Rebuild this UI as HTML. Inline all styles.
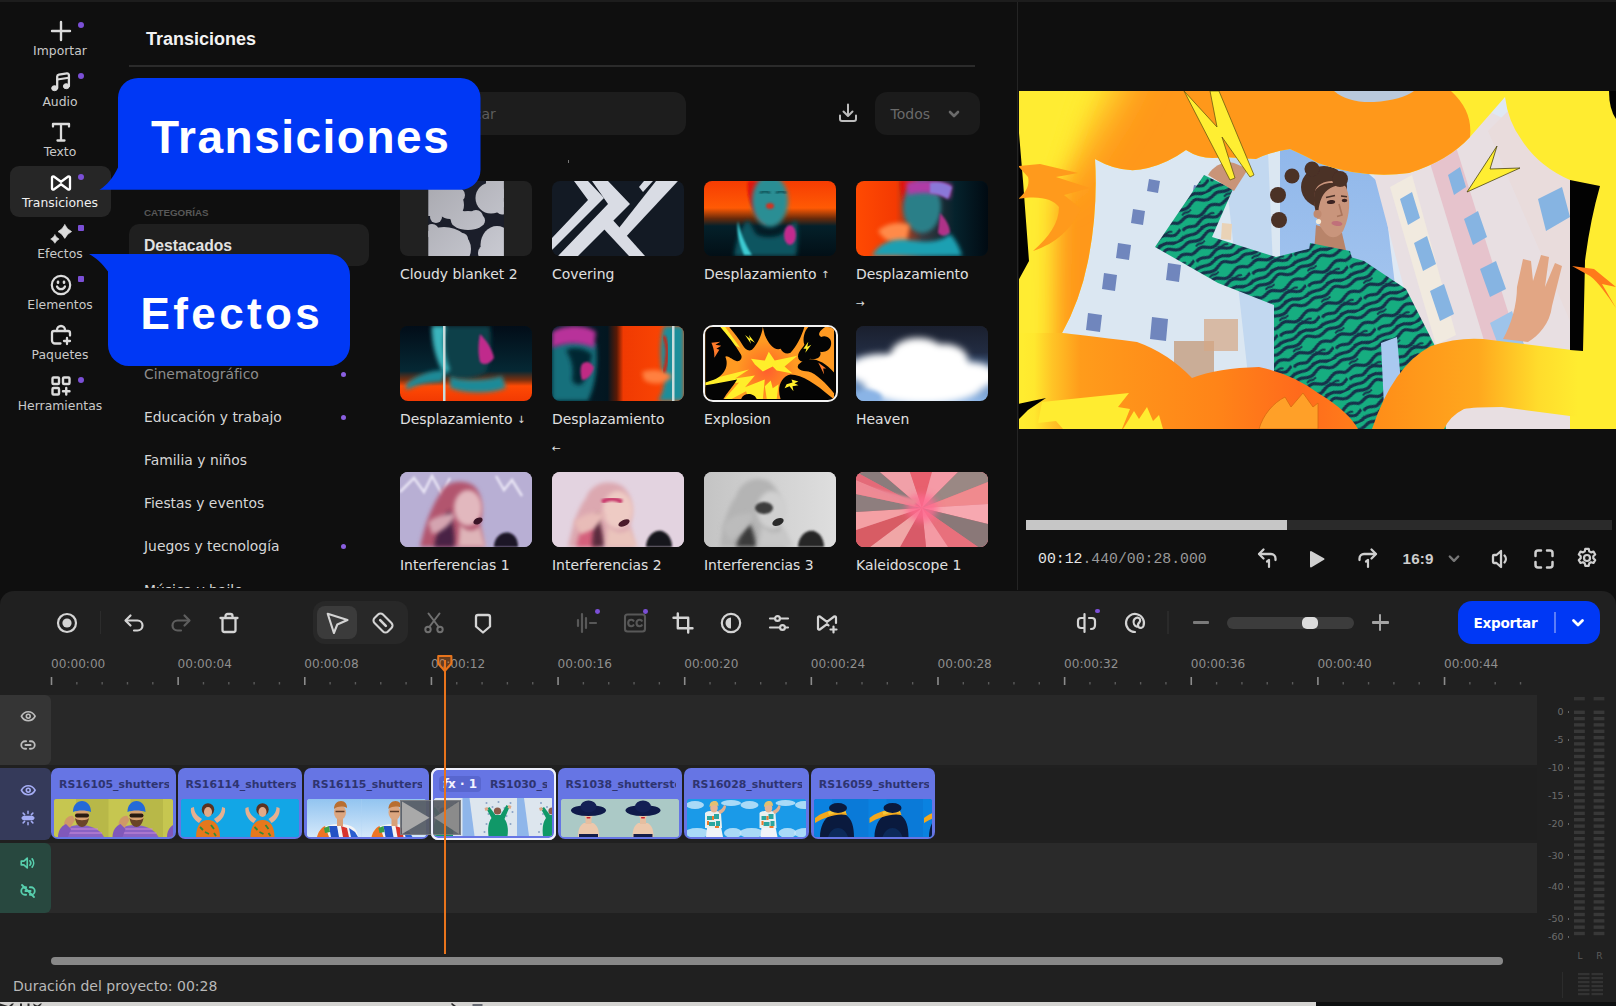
<!DOCTYPE html>
<html lang="es">
<head>
<meta charset="utf-8">
<title>Editor de vídeo</title>
<style>
*{box-sizing:border-box;margin:0;padding:0}
html,body{width:1616px;height:1006px;overflow:hidden;background:#0f0f0f}
body{position:relative;font-family:"Liberation Sans",sans-serif;color:#e4e4e4}
.abs{position:absolute}
#topstrip{left:0;top:0;width:1616px;height:2px;background:#1d1d1d}
/* sidebar */
.sb{position:absolute;left:0;width:120px;text-align:center;font-family:"DejaVu Sans","Liberation Sans",sans-serif;font-size:12.4px;color:#c9c9c9;line-height:16px;white-space:nowrap}
.sb svg{position:absolute;left:48.5px;top:-24px;width:24px;height:24px;fill:none;stroke:#dcdcdc;stroke-width:2;stroke-linecap:round;stroke-linejoin:round}
.dot{position:absolute;width:6px;height:6px;border-radius:50%;background:#7b4fd6}
#sbsel{left:10px;top:166px;width:101px;height:51px;border-radius:9px;background:#262626}
/* panel */
#ptitle{left:146px;top:28.3px;font-size:18px;font-weight:bold;color:#f2f2f2;line-height:22px}
#pline{left:129px;top:65.4px;width:846px;height:1.6px;background:#2b2b2b}
#search{left:396px;top:92px;width:290px;height:43px;border-radius:12px;background:#1d1d1d}
#search span{position:absolute;left:52px;top:12px;font-family:"DejaVu Sans","Liberation Sans",sans-serif;font-size:14px;color:#5c5c5c;line-height:20px}
#todos{left:875px;top:92px;width:105px;height:43px;border-radius:12px;background:#1b1b1b}
#todos span{position:absolute;left:15.5px;top:12px;font-family:"DejaVu Sans","Liberation Sans",sans-serif;font-size:14px;color:#6a6a6a;line-height:20px}
.cat{position:absolute;left:144px;font-family:"DejaVu Sans","Liberation Sans",sans-serif;font-size:13.9px;color:#d6d6d6;line-height:20px;white-space:nowrap}
.cdot{position:absolute;left:340.5px;width:5px;height:5px;margin-top:.5px;border-radius:50%;background:#8a5fe0}
#catsel{left:129px;top:224px;width:240px;height:42px;border-radius:10px;background:#1f1f1f}
.th{position:absolute;width:132px;height:75px;border-radius:8px;overflow:hidden;background:#222}
.th svg{position:absolute;left:0;top:0;width:132px;height:75px;display:block}
.tl{position:absolute;font-family:"DejaVu Sans","Liberation Sans",sans-serif;font-size:13.95px;color:#e0e0e0;line-height:20px;white-space:nowrap}
/* bubbles */
.bub{position:absolute;background:#0038f5;color:#fff;font-weight:bold;font-size:48px;line-height:56px;white-space:nowrap}
/* preview */
#vdiv{left:1017px;top:2px;width:1px;height:588px;background:#242424}
#prev{left:1019px;top:91px;width:597px;height:338px;overflow:hidden;background:#ffe92e}
#pbar{left:1026px;top:520px;width:586px;height:10px;background:#2a2a2a}
#pbar i{position:absolute;left:0;top:0;width:261px;height:10px;background:#c6c6c6}
#tc{left:1038px;top:549.6px;font-family:"Liberation Mono",monospace;font-size:14.8px;line-height:18px;color:#9a9a9a;white-space:nowrap}
#tc b{font-weight:normal;color:#e6e6e6}
/* timeline */
#tlp{left:0;top:590.5px;width:1616px;height:411.5px;background:#202020;border-radius:14px 14px 0 0}
#botl{left:0;top:1002.2px;width:1316px;height:3.8px;background:#d4d3d1}
#botr{left:1316px;top:1002.6px;width:300px;height:3.4px;background:#0d0f10}
.rl{position:absolute;top:656px;font-family:"DejaVu Sans","Liberation Sans",sans-serif;font-size:12.1px;color:#8f8f8f;line-height:16px;white-space:nowrap}
.trk{position:absolute;left:0;width:1537px;height:70px;background:#282828}
.trk i{position:absolute;left:0;top:0;width:51px;height:70px;border-radius:0 6px 6px 0}
.clip{position:absolute;top:768px;height:71px;border-radius:7px;background:#6675e4;overflow:hidden}
.clip span{position:absolute;left:8px;top:8.5px;width:110px;overflow:hidden;font-family:"DejaVu Sans","Liberation Sans",sans-serif;font-size:10.9px;font-weight:bold;color:#2e3470;line-height:16px;white-space:nowrap}
.clip.sel{border:2px solid #eef0fb;top:768px;height:71.5px}
.clip.sel span{top:6.5px}
.clip.sel .im{left:1px;right:1px;top:28px}
.fx{position:absolute;left:6px;top:5.5px;width:42px;height:16.5px;border-radius:4px;background:#5866cf;color:#f2f3ff;font:bold 12px/16.5px "DejaVu Sans","Liberation Sans",sans-serif;text-align:center;white-space:nowrap}
.fx em{font-style:italic}
.clip .im{position:absolute;left:3px;right:3px;top:30.5px;height:38px;border-radius:3px;overflow:hidden}
#scroll{left:51px;top:957px;width:1452px;height:8px;border-radius:4px;background:#888}
#status{left:13px;top:975.5px;font-family:"DejaVu Sans","Liberation Sans",sans-serif;font-size:14px;color:#b9b9b9;line-height:20px}
.ic{position:absolute;width:24px;height:24px;fill:none;stroke:#d8d8d8;stroke-width:2;stroke-linecap:round;stroke-linejoin:round;overflow:visible}
</style>
</head>
<body>
<div class="abs" id="topstrip"></div>
<!--SIDEBAR-->
<div class="abs" id="sbsel"></div>
<div class="sb" style="top:43px">Importar<svg viewBox="0 0 24 24" style="stroke-width:2.4"><path d="M12 3v18M3 12h18"/></svg><i class="dot" style="left:78px;top:-21px"></i></div>
<div class="sb" style="top:93.7px">Audio<svg viewBox="0 0 24 24"><path d="M8.2 18V6.6c0-1 .7-1.8 1.700-2L18 3.400c1-.1 1.900.6 1.900 1.600V16" stroke-width="2.300"/><path d="M8.400 9.400L19.800 7.700" stroke-width="2"/><ellipse cx="5.600" cy="18.200" rx="2.900" ry="2.500" fill="#dcdcdc" stroke-width="1"/><ellipse cx="17.300" cy="16.200" rx="2.900" ry="2.500" fill="#dcdcdc" stroke-width="1"/></svg><i class="dot" style="left:78px;top:-21px"></i></div>
<div class="sb" style="top:144.400px">Texto<svg viewBox="0 0 24 24" style="stroke-width:2.300"><path d="M4 6.500V4h16v2.500M12 4v16.500M8.500 20.500h7"/></svg></div>
<div class="sb" style="top:195.100px;color:#f0f0f0">Transiciones<svg viewBox="0 0 24 24" style="stroke:#fff;stroke-width:2.300"><path d="M3 6.500c0-1 1-1.500 1.800-1L12 10.800l7.200-5.300c.8-.5 1.800 0 1.800 1v11c0 1-1 1.500-1.800 1L12 13.200l-7.200 5.300c-.8.500-1.800 0-1.800-1z"/></svg><i class="dot" style="left:78px;top:-21px"></i></div>
<div class="sb" style="top:245.800px">Efectos<svg viewBox="0 0 24 24" style="stroke:none;fill:#dcdcdc"><path d="M15.800 2.800Q18 7.400 22.600 9.600Q18 11.800 15.800 16.400Q13.600 11.800 9 9.600Q13.600 7.400 15.800 2.800Z" stroke="#dcdcdc" stroke-width=".7" stroke-linejoin="round"/><path d="M5.900 12.900Q7.300 15.700 10.100 17.100Q7.300 18.500 5.900 21.300Q4.500 18.500 1.700 17.100Q4.500 15.700 5.900 12.900Z" stroke="#dcdcdc" stroke-width=".6" stroke-linejoin="round"/></svg><i class="dot" style="left:78px;top:-21px;border-radius:1px"></i></div>
<div class="sb" style="top:296.500px">Elementos<svg viewBox="0 0 24 24" style="stroke-width:2.200"><circle cx="12" cy="12" r="9.200"/><path d="M8 13.500c.8 1.800 2.300 2.700 4 2.700s3.200-.9 4-2.700"/><path d="M9 8.800v1M15 8.800v1" stroke-width="2.600"/></svg><i class="dot" style="left:78px;top:-21px;border-radius:1px"></i></div>
<div class="sb" style="top:347.200px">Paquetes<svg viewBox="0 0 24 24" style="stroke-width:2.300"><path d="M11.500 20.500H6c-1.700 0-3-1.300-3-3V10c0-1.100.9-2 2-2h14c1.100 0 2 .9 2 2v2.500"/><path d="M8 8V7c0-2.200 1.800-4 4-4s4 1.800 4 4v1"/><path d="M18 15v6M15 18h6"/></svg></div>
<div class="sb" style="top:397.900px">Herramientas<svg viewBox="0 0 24 24" style="stroke-width:2.400"><rect x="3.500" y="3.500" width="6.500" height="6.500" rx="1"/><rect x="14" y="3.500" width="6.500" height="6.500" rx="1"/><rect x="3.500" y="14" width="6.500" height="6.500" rx="1"/><path d="M17.250 14v6.500M14 17.250h6.500"/></svg><i class="dot" style="left:78px;top:-21px"></i></div>
<!--/SIDEBAR-->
<!--PANEL-->
<svg width="0" height="0" style="position:absolute"><defs>
<filter id="b1" x="-20%" y="-20%" width="140%" height="140%"><feGaussianBlur stdDeviation="1"/></filter>
<filter id="b2" x="-30%" y="-30%" width="160%" height="160%"><feGaussianBlur stdDeviation="2"/></filter>
<filter id="b3" x="-40%" y="-40%" width="180%" height="180%"><feGaussianBlur stdDeviation="3.500"/></filter>
<filter id="b20" filterUnits="userSpaceOnUse" x="-100" y="-100" width="500" height="500"><feGaussianBlur stdDeviation="20"/></filter>
<filter id="b11" filterUnits="userSpaceOnUse" x="-100" y="-100" width="400" height="600"><feGaussianBlur stdDeviation="11"/></filter>
<filter id="b07" filterUnits="userSpaceOnUse" x="-20" y="-20" width="640" height="380"><feGaussianBlur stdDeviation=".7"/></filter>
<filter id="b6" x="-50%" y="-50%" width="200%" height="200%"><feGaussianBlur stdDeviation="7"/></filter>
</defs></svg>
<div class="abs" id="ptitle">Transiciones</div>
<div class="abs" id="pline"></div>
<div class="abs" id="search"><span>Buscar</span></div>
<svg class="ic" style="left:836px;top:101px;stroke:#bdbdbd" viewBox="0 0 24 24"><path d="M12 3.500v11M7.500 10.500l4.500 4.500 4.500-4.500"/><path d="M4 14.500v3.500c0 1.100.9 2 2 2h12c1.100 0 2-.9 2-2v-3.500"/></svg>
<div class="abs" id="todos"><span>Todos</span><svg class="ic" style="left:71px;top:14px;width:16px;height:16px;stroke:#6a6a6a;stroke-width:2.600" viewBox="0 0 16 16"><path d="M4 6l4 4 4-4"/></svg></div>
<div class="abs" style="left:568px;top:160px;width:1px;height:3px;background:#777"></div>
<div class="abs" style="left:144px;top:205.500px;font-size:9.800px;font-weight:bold;color:#585858;line-height:14px;font-family:'Liberation Sans',sans-serif">CATEGORÍAS</div>
<div class="abs" id="catsel"></div>
<div class="cat" style="top:236px;font-weight:bold;color:#e2e2e2;font-family:'Liberation Sans',sans-serif;font-size:15.700px">Destacados</div>
<div class="cat" style="top:364px;color:#8d8d8d">Cinematográfico</div><i class="cdot" style="top:371px"></i>
<div class="cat" style="top:407px">Educación y trabajo</div><i class="cdot" style="top:414px"></i>
<div class="cat" style="top:450px">Familia y niños</div>
<div class="cat" style="top:493px">Fiestas y eventos</div>
<div class="cat" style="top:536px">Juegos y tecnología</div><i class="cdot" style="top:543px"></i>
<div class="abs" style="left:144px;top:580px;width:120px;height:8px;overflow:hidden"><div class="cat" style="left:0;top:0">Música y baile</div></div>
<!--THUMBS-->
<div class="th" style="left:400px;top:181px;background:#212121"><svg viewBox="0 0 132 75"><defs><linearGradient id="cb" gradientUnits="userSpaceOnUse" x1="28" y1="0" x2="104" y2="75"><stop offset="0" stop-color="#a9a9b0"/><stop offset="1" stop-color="#c9cad2"/></linearGradient></defs><clipPath id="cbc"><rect x="28.300" width="75.600" height="75"/></clipPath><g clip-path="url(#cbc)"><rect x="28" width="76" height="75" fill="#1b1e2a"/><g fill="url(#cb)"><rect x="20" y="-5" width="38" height="40"/><circle cx="50" cy="24" r="14"/><circle cx="58" cy="14" r="7"/><circle cx="36" cy="36" r="6"/><ellipse cx="68" cy="39.500" rx="17" ry="9.500"/><circle cx="58" cy="36" r="8"/><circle cx="76" cy="36" r="7"/><circle cx="91" cy="17" r="15.500"/><rect x="86" y="-5" width="30" height="22"/><circle cx="102" cy="27" r="6.500"/><ellipse cx="44" cy="68" rx="27" ry="22"/><circle cx="32" cy="50" r="7"/><circle cx="62" cy="58" r="6"/><ellipse cx="97" cy="64" rx="16.500" ry="19"/><circle cx="86" cy="72" r="8"/></g></g></svg></div>
<div class="th" style="left:552px;top:181px;background:#131a24"><svg viewBox="0 0 132 75"><g fill="#d9dce4"><path d="M22 0h14l16 17L0 69V57l36-38z"/><path d="M40 0h16l22 23L26 75H6l50-52z"/><path d="M50 46l9-9 34 38H77z"/><path d="M104 0h22L70 60l-7-8z"/><path d="M92 0h9L91 11l-4-5z"/></g></svg></div>
<div class="th" style="left:704px;top:181px;background:#03161d"><svg viewBox="0 0 132 75"><defs><linearGradient id="d1" x1="0" y1="0" x2="0" y2="1"><stop offset="0" stop-color="#f63c02"/><stop offset=".36" stop-color="#ff5a04"/><stop offset=".5" stop-color="#6a2a0a"/><stop offset=".6" stop-color="#04202a"/><stop offset="1" stop-color="#020f16"/></linearGradient></defs><rect width="132" height="75" fill="url(#d1)"/><path d="M44 0c-2 12 2 26 10 38l8 6-4-44z" fill="#e0120c" filter="url(#b1)"/><ellipse cx="66" cy="20" rx="18" ry="26" fill="#2a8e94" filter="url(#b2)"/><path d="M30 75c2-14 6-28 14-36l8 14c6 4 20 4 26 0l14-14c2 10 2 24 0 36z" fill="#0b5561" filter="url(#b2)"/><path d="M34 40c2 10 6 22 14 34h-8c-4-10-8-22-6-34z" fill="#3ccbd2" filter="url(#b1)"/><ellipse cx="86" cy="54" rx="6" ry="10" fill="#c22a8e" filter="url(#b1)"/><path d="M56 12c3-2 7-2 10 0M72 12c3-2 7-2 10 0" stroke="#0a3a40" stroke-width="2" fill="none" filter="url(#b1)"/><ellipse cx="66" cy="25" rx="4" ry="3" fill="#d03020" filter="url(#b1)"/></svg></div>
<div class="th" style="left:856px;top:181px;background:#03161d"><svg viewBox="0 0 132 75"><defs><linearGradient id="d2" x1="0" y1="0" x2="1" y2="0"><stop offset="0" stop-color="#ff4a02"/><stop offset=".3" stop-color="#f43a02"/><stop offset=".5" stop-color="#3a3a40"/><stop offset=".75" stop-color="#05222c"/><stop offset="1" stop-color="#010a12"/></linearGradient></defs><rect width="132" height="75" fill="url(#d2)"/><path d="M44 0c0 14 4 28 12 40l6-40z" fill="#e0120c" filter="url(#b1)"/><ellipse cx="66" cy="26" rx="19" ry="26" fill="#2a7f88" filter="url(#b2)"/><path d="M50 2c10-4 30-4 46 2l-2 14c-10-6-28-8-42-4z" fill="#b03aa6" filter="url(#b2)"/><path d="M74 2c8-2 16 0 22 4l-4 12c-6-4-12-6-18-6z" fill="#8a78d8" filter="url(#b1)"/><path d="M84 32c4 4 10 12 10 20-4 4-8 4-12 0z" fill="#b03088" filter="url(#b1)"/><path d="M22 50c8-8 22-10 32-6l-4 18c-10 2-20 0-28-12z" fill="#ff8a48" filter="url(#b2)"/><path d="M16 75c6-12 20-18 36-16 14 2 30 4 42-6 6 6 10 14 12 22z" fill="#1aa0b2" filter="url(#b2)"/></svg></div>
<div class="th" style="left:400px;top:326px;background:#03161d"><svg viewBox="0 0 132 75"><defs><linearGradient id="d3" x1="0" y1="0" x2="0" y2="1"><stop offset="0" stop-color="#020d18"/><stop offset=".6" stop-color="#052834"/><stop offset=".72" stop-color="#7a3010"/><stop offset=".8" stop-color="#ff4a04"/><stop offset="1" stop-color="#f23a02"/></linearGradient></defs><rect width="132" height="75" fill="url(#d3)"/><path d="M32 0c0 18 6 34 14 48 10 6 28 6 40-2 4-12 6-30 4-46z" fill="#0d4048" filter="url(#b2)"/><path d="M32 0h14c-4 14-2 30 4 44l-6 4c-8-14-12-30-12-48z" fill="#3ab4bc" filter="url(#b2)"/><path d="M80 8c6 6 12 14 14 24-4 6-10 8-14 4-2-8-2-18 0-28z" fill="#c02a8c" filter="url(#b1)"/><path d="M6 58c12-10 26-14 40-14l-4 12c-12 0-24 2-36 8z" fill="#1a8a98" filter="url(#b2)"/><path d="M50 50c10 6 40 4 52 0l4 12c-16 6-40 6-56 0z" fill="#1a8a98" filter="url(#b2)"/><rect x="43" width="2.500" height="75" fill="#c9dcdc"/></svg></div>
<div class="th" style="left:552px;top:326px;background:#03161d"><svg viewBox="0 0 132 75"><defs><linearGradient id="d4" x1="0" y1="0" x2="1" y2="0"><stop offset="0" stop-color="#04202c"/><stop offset=".42" stop-color="#031620"/><stop offset=".49" stop-color="#5a1a06"/><stop offset=".54" stop-color="#f03a02"/><stop offset="1" stop-color="#ff4a04"/></linearGradient></defs><rect width="132" height="75" fill="url(#d4)"/><path d="M0 20c10-6 30-8 44-2 2 20 0 40-8 57H0z" fill="#14707c" filter="url(#b2)"/><path d="M0 6c12-8 34-8 44 0l-2 16c-12-6-30-6-42 0z" fill="#b8309a" filter="url(#b2)"/><path d="M14 24c8-4 18-2 26 4-2 10-4 22-10 30-4 2-8 0-10-4 2-10 0-20-6-30z" fill="#062630" filter="url(#b2)"/><path d="M30 38c4-4 10-2 12 4-2 6-6 12-12 12-2-6-2-12 0-16z" fill="#c02a84" filter="url(#b1)"/><path d="M112 0h20v75h-26c6-10 8-20 4-32-2-14-2-30 2-43z" fill="#1e8e9a" filter="url(#b2)"/><path d="M90 46c10-4 22-2 30 4-6 8-18 10-28 4z" fill="#ff8040" filter="url(#b2)"/><path d="M112 10c4 10 4 24 0 36" stroke="#d02010" stroke-width="3" fill="none" filter="url(#b1)"/><rect x="120" width="2.500" height="75" fill="#c9dcdc"/></svg></div>
<div class="th" style="left:703px;top:325px;width:134.500px;height:77.200px;border-radius:10px;background:#000;border:2.500px solid #f2f2f2"><svg viewBox="0 0 130 73" style="width:129.500px;height:72.200px"><defs><radialGradient id="exg" gradientUnits="userSpaceOnUse" cx="62" cy="44" r="30"><stop offset="0" stop-color="#ff5e2e"/><stop offset=".5" stop-color="#ff7c24"/><stop offset="1" stop-color="#ff9a22"/></radialGradient></defs><rect width="130" height="73" fill="url(#exg)"/>
<g fill="#ffee2a"><path d="M46 32L60 34 64 25 70 34 93 29 80 40 88 47 72 44 68 40 58 45 50 38Z"/><path d="M0 54L44 43 30 52 50 49 40 61 60 53 58 73H44L41 65 26 73H19L34 56 0 61Z"/><path d="M10 0H20L35 21 28 18Z"/><path d="M60 60l6-6 2 8 6-4-2 15H62z"/></g>
<g fill="#040404"><path d="M24 0H58C57 8 53 17 47 23C43 25 40 22 38 19C34 12 29 6 24 0Z"/><path d="M0 0H15C22 8 30 18 36 28C38 32 34 36 30 34C26 32 22 28 20 30C24 38 20 50 6 54L0 56Z"/><path d="M58 0H100C97 10 92 20 86 26C82 28 78 26 76 22C70 24 64 18 60 8Z"/><path d="M104 0H121C115 4 113 8 117 10C123 8 128 12 127 18C126 24 120 26 116 25C118 30 112 34 106 32C102 36 96 36 94 32C92 26 98 22 100 18C98 12 100 4 104 0Z"/><path d="M99 34C108 30 120 34 130 46V67C122 57 112 47 104 45C98 45 91 43 94 38Z"/><path d="M76 73C72 62 76 50 86 48C98 48 112 58 126 70L130 73Z"/><path d="M0 59C10 57 22 55 32 53C28 60 22 66 18 73H0Z"/><path d="M36 73C38 68 44 66 50 70L52 73Z"/></g>
<g fill="#ffee2a"><path d="M40 8l5 4-1-4 6 8-5-3 1 4zM99 22l5-7-1 5 4-2-6 8 1-4zM82 58l6-2-1-3 7 2-4 2 4 2-6 1 1 5-4-5-5 2z"/></g>
<g fill="#ff7a2a"><path d="M6 16l9-1-5 3 6 1-5 3 3 1-5 8c0-4 0-8-3-15zM114 36l8 6-3 0 1 6z"/></g></svg></div>
<div class="th" style="left:856px;top:326px"><svg viewBox="0 0 132 75"><defs><linearGradient id="hv" x1="0" y1="0" x2="0" y2="1"><stop offset="0" stop-color="#1a1f2e"/><stop offset=".35" stop-color="#222c42"/><stop offset=".6" stop-color="#4a6c9a"/><stop offset="1" stop-color="#8ab4e6"/></linearGradient></defs><rect width="132" height="75" fill="url(#hv)"/><g fill="#fff" filter="url(#b3)"><ellipse cx="62" cy="30" rx="28" ry="18"/><ellipse cx="88" cy="34" rx="24" ry="16"/><ellipse cx="26" cy="44" rx="34" ry="16"/><ellipse cx="112" cy="50" rx="28" ry="14"/><ellipse cx="68" cy="58" rx="60" ry="20"/></g><ellipse cx="64" cy="46" rx="46" ry="18" fill="#fff" filter="url(#b2)"/><ellipse cx="12" cy="72" rx="14" ry="8" fill="#8ab4e6" filter="url(#b2)"/></svg></div>
<div class="th" style="left:400px;top:472px;background:#b9aed2"><svg viewBox="0 0 132 75"><rect width="132" height="75" fill="#b8afd4"/><path d="M0 20L14 6l10 14 8-16 10 18 8-16M96 4l8 14 8-10 10 16" stroke="#e8e4f4" stroke-width="2.500" fill="none" filter="url(#b1)"/><path d="M40 22c4-12 22-16 34-8 8 8 10 24 6 38l4 23H20c4-18 10-38 20-53z" fill="#b2546e" filter="url(#b2)"/><path d="M50 38c2 12 6 26 4 37H34c2-14 8-28 16-37z" fill="#4a2444" filter="url(#b2)"/><ellipse cx="68" cy="36" rx="14" ry="18" fill="#e2b8be" filter="url(#b2)"/><path d="M60 52c6 8 14 8 20 2l6 21H58z" fill="#deb4b8" filter="url(#b2)"/><path d="M28 50c8-6 20-10 28-8-4 10-14 18-24 20z" fill="#d4a4b0" filter="url(#b2)"/><ellipse cx="78" cy="49" rx="5" ry="3" fill="#3a1426" transform="rotate(-28 78 49)"/><path d="M94 75c0-10 8-16 16-14 6 2 8 8 8 14z" fill="#1a1428" filter="url(#b1)"/></svg></div>
<div class="th" style="left:552px;top:472px;background:#e4d4e0"><svg viewBox="0 0 132 75"><rect width="132" height="75" fill="#e3d3e0"/><path d="M34 26c4-14 22-20 36-12 10 8 12 24 8 38l4 23H16c4-18 8-36 18-49z" fill="#dca8b0" filter="url(#b2)"/><path d="M28 60c6-4 14-4 20 0l-4 15H24z" fill="#d4607c" filter="url(#b2)"/><path d="M46 40c2 12 6 24 6 35H40c0-12 2-24 6-35z" fill="#5a2a3c" filter="url(#b2)"/><ellipse cx="66" cy="38" rx="15" ry="19" fill="#eecbc4" filter="url(#b2)"/><path d="M56 54c8 8 16 8 22 2l8 19H54z" fill="#eac4bc" filter="url(#b2)"/><path d="M22 50c8-8 22-12 32-8-6 10-16 18-26 20z" fill="#e8bcb8" filter="url(#b2)"/><path d="M50 30c6-4 14-4 20 0" stroke="#c8386a" stroke-width="4" fill="none" filter="url(#b1)"/><ellipse cx="72" cy="51" rx="6" ry="3" fill="#4a1a2a" transform="rotate(-24 72 51)"/><path d="M94 75c0-10 8-18 16-16 6 2 10 8 10 16z" fill="#15131c" filter="url(#b1)"/></svg></div>
<div class="th" style="left:704px;top:472px;background:#d4d4d4"><svg viewBox="0 0 132 75"><defs><linearGradient id="i3" x1="0" y1="0" x2="1" y2="0"><stop offset="0" stop-color="#c4c4c4"/><stop offset="1" stop-color="#dedede"/></linearGradient></defs><rect width="132" height="75" fill="url(#i3)"/><path d="M32 24c4-14 20-22 34-14 10 8 14 24 10 38l6 27H16c2-18 6-38 16-51z" fill="#b4b4b4" filter="url(#b2)"/><path d="M46 52c4 8 6 16 6 23H32c2-10 8-18 14-23z" fill="#3a3a3a" filter="url(#b2)"/><ellipse cx="68" cy="38" rx="15" ry="19" fill="#d0d0d0" filter="url(#b2)"/><path d="M58 54c8 8 16 8 22 2l10 19H54z" fill="#c8c8c8" filter="url(#b2)"/><path d="M18 56c4-10 18-16 32-14-4 10-12 20-24 26z" fill="#bcbcbc" filter="url(#b2)"/><ellipse cx="60" cy="36" rx="9" ry="6" fill="#3c3c3c" filter="url(#b1)"/><ellipse cx="74" cy="50" rx="6" ry="3.500" fill="#2a2a2a" transform="rotate(-24 74 50)"/><path d="M94 75c0-10 8-18 16-16 6 2 10 8 10 16z" fill="#262626" filter="url(#b1)"/></svg></div>
<div class="th" style="left:856px;top:472px;background:#d86a7a"><svg viewBox="0 0 132 75"><rect width="132" height="75" fill="#e0707e"/><g><path d="M66 36L0 0h24z" fill="#8a7c7c"/><path d="M66 36L24 0h30z" fill="#f0a0a8"/><path d="M66 36L54 0h22z" fill="#e8606e"/><path d="M66 36L76 0h26z" fill="#f59aa6"/><path d="M66 36L102 0h30v10z" fill="#9a8884"/><path d="M66 36L132 10v22z" fill="#f08a8e"/><path d="M66 36L132 32v20z" fill="#f7a8b0"/><path d="M66 36L132 52v23h-10z" fill="#8a7878"/><path d="M66 36L122 75H92z" fill="#e8707c"/><path d="M66 36L92 75H70z" fill="#f49aa4"/><path d="M66 36L70 75H44z" fill="#d85a68"/><path d="M66 36L44 75H14z" fill="#f0a6a6"/><path d="M66 36L14 75H0V58z" fill="#d85c64"/><path d="M66 36L0 58V40z" fill="#f4a0a4"/><path d="M66 36L0 40V22z" fill="#8e7e7e"/><path d="M66 36L0 22V8z" fill="#ee8a94"/><path d="M66 36L0 8V0z" fill="#e46a78"/></g><ellipse cx="66" cy="36" rx="16" ry="14" fill="#ff6a92" filter="url(#b3)" opacity=".8"/><path d="M2 12l60 16-4 6z" fill="#ec8896" filter="url(#b1)"/></svg></div>
<!--/THUMBS-->
<div class="tl" style="left:400px;top:264px">Cloudy blanket 2</div>
<div class="tl" style="left:552px;top:264px">Covering</div>
<div class="tl" style="left:704px;top:264px">Desplazamiento <span style="font-size:10px;position:relative;top:-1px">↑</span></div>
<div class="tl" style="left:856px;top:264px">Desplazamiento</div>
<div class="tl" style="left:856px;top:293px;font-size:10.5px">→</div>
<div class="tl" style="left:400px;top:409px">Desplazamiento <span style="font-size:10px;position:relative;top:-1px">↓</span></div>
<div class="tl" style="left:552px;top:409px">Desplazamiento</div>
<div class="tl" style="left:552px;top:438px;font-size:10.5px">←</div>
<div class="tl" style="left:704px;top:409px">Explosion</div>
<div class="tl" style="left:856px;top:409px">Heaven</div>
<div class="tl" style="left:400px;top:555px">Interferencias 1</div>
<div class="tl" style="left:552px;top:555px">Interferencias 2</div>
<div class="tl" style="left:704px;top:555px">Interferencias 3</div>
<div class="tl" style="left:856px;top:555px">Kaleidoscope 1</div>
<div class="abs" id="vdiv"></div>
<!--/PANEL-->
<!--PREVIEW-->
<div class="abs" id="prev"><svg width="598" height="338" viewBox="0 0 598 338" style="position:absolute;left:-1px;top:-.5px">
<defs>
<linearGradient id="pgA" gradientUnits="userSpaceOnUse" x1="30" y1="0" x2="170" y2="70"><stop offset="0" stop-color="#ffec30"/><stop offset=".35" stop-color="#ffe42c"/><stop offset=".75" stop-color="#ffa51c"/><stop offset="1" stop-color="#ff981a"/></linearGradient>
<linearGradient id="pgB" gradientUnits="userSpaceOnUse" x1="8" y1="0" x2="70" y2="0"><stop offset="0" stop-color="#ffec30"/><stop offset=".3" stop-color="#ffd428"/><stop offset="1" stop-color="#ff9a1a"/></linearGradient>
<linearGradient id="pgC" gradientUnits="userSpaceOnUse" x1="5" y1="0" x2="330" y2="0"><stop offset="0" stop-color="#ffec30"/><stop offset=".035" stop-color="#ffe82e"/><stop offset=".09" stop-color="#ffc426"/><stop offset=".175" stop-color="#ff9c1b"/><stop offset=".3" stop-color="#ff941a"/><stop offset=".6" stop-color="#ff8418"/><stop offset=".85" stop-color="#ff6a1c"/><stop offset="1" stop-color="#ff7a1a"/></linearGradient>
<linearGradient id="pgD" gradientUnits="userSpaceOnUse" x1="360" y1="0" x2="560" y2="0"><stop offset="0" stop-color="#ff8e18"/><stop offset=".5" stop-color="#ffa81e"/><stop offset=".8" stop-color="#ffdc2c"/><stop offset="1" stop-color="#ffec30"/></linearGradient>
<linearGradient id="pgS" x1="0" y1="0" x2="0" y2="1"><stop offset="0" stop-color="#8eb6ea"/><stop offset="1" stop-color="#b4d0f2"/></linearGradient>
<clipPath id="pclip"><path d="M77 68Q105 84 130 77Q150 72 168 59Q185 70 205 66L238 68Q255 60 272 58Q290 66 300 72Q345 88 391 82Q430 70 452 46L487 6Q490 30 503 48Q520 75 552 89V338H45L44 242Q62 210 70 170Q80 120 77 68Z"/></clipPath>
<pattern id="zeb" width="46" height="34" patternUnits="userSpaceOnUse" patternTransform="rotate(-24)"><rect width="46" height="34" fill="#16ad80"/><path d="M-2 5c6-5 12 4 19 0s9-5 14-1 10 3 17-1M-2 15c5 4 10-4 16-1s8 6 15 2 9-5 17 0M3 24c6-3 9 3 14 1s9-6 15-2 8 3 13 0M-2 32c7-3 11 2 17 0s10-4 16-1 9 3 15 0" stroke="#17324c" stroke-width="3.200" fill="none" stroke-linecap="round"/><path d="M8 10c3-2 6 1 9-1M28 20c3 2 6-1 9 1M20 29c3-1 5 1 8 0" stroke="#17324c" stroke-width="2" fill="none" stroke-linecap="round"/></pattern>
</defs>
<rect width="598" height="338" fill="#ffec30"/>
<!--PHOTO-->
<g clip-path="url(#pclip)"><g filter="url(#b07)">
<rect x="-20" y="-20" width="640" height="380" fill="#dfe8f3"/>
<path d="M250 40L300 40 365 95 385 260 340 338 250 338z" fill="url(#pgS)"/>
<path d="M60 50L262 50 262 338 40 338z" fill="#dbe7f2"/>
<path d="M205 60L250 60 262 338 236 338z" fill="#c2d8f0"/>
<g fill="#6f86bd"><path d="M131 88l11 2-2 12-11-2zM115 118l12 2-2 14-12-2zM100 152l13 2-2 15-13-2zM86 182l13 2-2 16-13-2zM150 172l13 2-2 17-13-2zM70 222l14 2-2 17-14-2zM134 226l16 2-2 22-16-2zM176 94l9 2-2 11-9-2zM164 120l10 2-2 12-10-2z"/></g>
<g fill="#e9d2b6"><path d="M203 92l10 1-1 14-10-1zM204 132l10 1-1 16-10-1z"/></g>
<path d="M156 250l40 0 0 70-40 0z" fill="#c49a78" opacity=".75"/><path d="M186 228l34 0 0 32-34 0z" fill="#d6a684" opacity=".7"/>
<path d="M355 80L470 20 552 60 552 338 420 338 400 250z" fill="#e8dfe2"/>
<path d="M372 96l22-12 44 160-20 10z" fill="#f1eadf"/>
<path d="M412 72l26-16 60 190-30 10z" fill="#e6c3cc"/>
<path d="M470 40l20-20 62 70v140z" fill="#e9dcdc"/>
<g fill="#86b4e2"><path d="M382 108l12-7 8 26-12 7zM396 152l13-7 9 28-13 7zM412 200l14-7 10 30-14 7zM430 84l12-8 6 20-12 8zM446 128l14-8 9 26-14 8zM462 178l16-8 10 28-16 8zM480 232l16-8 10 30-16 8zM520 108l24-12 8 30-24 14z"/></g>
<path d="M472 232l22-12 24 70-20 12z" fill="#9ec4ea"/>
<!--woman-->
<path d="M186 84L215 98 194 146 258 166 298 156 346 170 388 198 417 255 428 338 256 338 256 214 200 192 137 156Z" fill="url(#zeb)"/>
<path d="M363 252l16-6 8 92h-20z" fill="#a9c9f0"/>
<path d="M298 134l26 8 6 26-34-6z" fill="#b8846a"/>
<path d="M292 152l40 8 4 14-46-6z" fill="url(#zeb)"/>
<ellipse cx="306" cy="96" rx="23" ry="21" fill="#4b3026"/>
<path d="M297 100C300 89 320 86 328 96C333 108 332 124 326 138C322 147 313 149 307 142C299 133 295 118 297 100Z" fill="#c9957c"/>
<path d="M297 100C302 92 314 90 324 94C316 94 308 98 304 106C301 112 300 120 300 126C296 118 295 108 297 100Z" fill="#4b3026"/>
<ellipse cx="313" cy="111" rx="4.200" ry="2" fill="#3a2420" transform="rotate(-8 313 111)"/><ellipse cx="326.500" cy="109.500" rx="2.800" ry="1.700" fill="#3a2420"/>
<path d="M308 106.500l9-2M323 105l6 .8" stroke="#4a3028" stroke-width="1.600" fill="none"/>
<path d="M321 113l3 11-5 1.500" stroke="#a9745c" stroke-width="1.600" fill="none"/>
<ellipse cx="319" cy="132.500" rx="5.500" ry="2.500" fill="#c0707a" transform="rotate(6 319 132)"/>
<circle cx="299.500" cy="123" r="4" fill="#c08a70"/><circle cx="300.500" cy="130.500" r="2.600" fill="#f2ead8"/>
<g fill="#4b3026"><circle cx="260" cy="104" r="8"/><circle cx="261" cy="129" r="8"/><circle cx="274" cy="85" r="7.500"/><circle cx="294" cy="78" r="7.500"/><circle cx="322" cy="88" r="8"/></g>
<path d="M190 84c6-10 16-14 26-12l14 6-14 22z" fill="#c99478"/>
<path d="M485 248c8-14 14-34 14-52l6-28 8 2 2 20 8-26 8 2-4 30 10-24 7 3-10 40c-2 18-14 30-24 36z" fill="#e2a684"/>
</g></g>
<!--BLOBS-->
<clipPath id="pclip2"><path d="M0 0H433Q455 20 452 46Q430 70 391 82Q345 88 300 72Q290 66 272 58Q255 60 238 68L205 66Q185 70 168 59Q150 72 130 77Q105 84 77 68Q80 120 70 170Q62 210 44 242L0 250z"/></clipPath>
<g clip-path="url(#pclip2)"><rect width="598" height="338" fill="#ff981a"/><path d="M-90 -90H140L95 10 40 95H-90z" fill="#ffec30" filter="url(#b20)"/><path d="M-90 -90H100L60 20 38 90 36 300H-90z" fill="#ffec30" filter="url(#b11)"/></g>
<path d="M316 0Q330 12 356 11Q384 9 396 0z" fill="#b9c9dc"/>
<path d="M0 242H44Q56 243 119 251Q150 262 174 287Q200 277 241 276Q275 283 300 302Q330 320 340 338H0z" fill="url(#pgC)"/>
<path d="M354 338Q375 275 413 255Q440 246 465 248L554 259 598 264V331L484 316Q455 316 446 318Q432 325 426 338z" fill="url(#pgD)"/>
<path d="M552 89L582 95Q572 130 567 170L565 260 552 259z" fill="#020202"/>
<path d="M591 0h7v28q-7-10-7-28z" fill="#020202"/>
<path d="M0 30l5 60 6 80-11 20zM0 313l28-6-18 12-10 10z" fill="#020202"/>
<path d="M24 311L111 302 100 316 112 318 104 338 45 338 38 330 20 332z" fill="#ffec30"/>
<path d="M110 330l6-10 5 8 8-12 6 14 6-6 4 14h-40z" fill="#ffec30"/>
<path d="M0 75l22-2 38 9-22 4 34 11-26 7 17 14c-10 20-24 34-48 42 16-14 26-28 26-44-6-8-20-12-41-8 8-6 12-14 10-22z" fill="#ff9a1c"/>
<path d="M554 175l22 3 22 18-14-3 14 24c-8-12-18-26-26-32z" fill="#ff7a1a"/>
<path d="M166 0L199 36 192 0 201 0 236 84 232 86 204 46 217 87 212 89z" fill="#ffee32" stroke="#6a5a10" stroke-width=".8"/>
<path d="M449 101L479 55 472 78 502 77z" fill="#ffee32" stroke="#4a4410" stroke-width=".8"/>
<path d="M241 338c4-14 14-26 26-32l6 10 12-14 10 14 5-4v26z" fill="#ffa028" stroke="#d86a10" stroke-width=".8"/>
</svg></div>
<div class="abs" id="pbar"><i></i></div>
<div class="abs" id="tc"><b>00:12</b>.440/00:28.000</div>
<!--CONTROLS-->
<svg class="ic" style="left:1256px;top:546px;stroke:#cfcfcf;stroke-width:2.300" viewBox="0 0 24 24"><path d="M7.500 3.500L3 8l4.500 4.500"/><path d="M3.500 8H15c2.500 0 4.500 2 4.500 4.500V14"/><path d="M11 15.500l2-1.500v7" stroke-width="2.200"/></svg>
<svg class="ic" style="left:1304.500px;top:546.500px;stroke:#cfcfcf;fill:#cfcfcf;stroke-width:2" viewBox="0 0 24 24"><path d="M6 5v14.500L18.500 12z"/></svg>
<svg class="ic" style="left:1354.500px;top:546px;stroke:#cfcfcf;stroke-width:2.300" viewBox="0 0 24 24"><path d="M16.500 3.500L21 8l-4.500 4.500"/><path d="M20.500 8H9C6.500 8 4.500 10 4.500 12.500V14"/><path d="M11 15.500l2-1.500v7" stroke-width="2.200"/></svg>
<div class="abs" style="left:1402.500px;top:548.500px;font:bold 15.200px/20px 'Liberation Sans',sans-serif;color:#cdcdcd;letter-spacing:.2px">16:9</div>
<svg class="ic" style="left:1446px;top:550.500px;width:16px;height:16px;stroke:#777;stroke-width:2.400" viewBox="0 0 16 16"><path d="M3.800 5.500L8 9.800l4.200-4.300"/></svg>
<svg class="ic" style="left:1488px;top:546.500px;stroke:#cfcfcf;stroke-width:2.300" viewBox="0 0 24 24"><path d="M5 9v6c0 .6.400 1 1 1h2.500l4.500 4V4L8.500 8H6c-.6 0-1 .4-1 1z"/><path d="M16.500 8.500c1.800 2 1.800 5 0 7"/></svg>
<svg class="ic" style="left:1532px;top:546.500px;stroke:#cfcfcf;stroke-width:2.500" viewBox="0 0 24 24"><path d="M3.500 9V6c0-1.400 1.100-2.500 2.500-2.500h3M15 3.500h3c1.400 0 2.500 1.100 2.500 2.500v3M20.500 15v3c0 1.400-1.100 2.500-2.500 2.500h-3M9 20.500H6c-1.400 0-2.500-1.100-2.500-2.500v-3"/></svg>
<svg class="ic" style="left:1574.700px;top:546px;stroke:#cfcfcf;stroke-width:2.200" viewBox="0 0 24 24"><circle cx="12" cy="12" r="3"/><path d="M10.300 2.800h3.400l.6 2.600 1.700 1 2.500-.8 1.700 2.900-1.900 1.800v2l1.900 1.800-1.700 2.900-2.500-.8-1.700 1-.6 2.600h-3.400l-.6-2.600-1.700-1-2.500.8-1.700-2.900 1.900-1.800v-2L3.800 8.500l1.700-2.900 2.500.8 1.700-1z"/></svg>
<!--/CONTROLS-->
<!--/PREVIEW-->
<!--TIMELINE-->
<div class="abs" id="tlp"></div>
<svg class="ic" style="left:55px;top:610.5px;stroke:#d4d4d4;stroke-width:2.2;" viewBox="0 0 24 24"><circle cx="12" cy="12" r="9"/><circle cx="12" cy="12" r="4.600" fill="#d4d4d4" stroke="none"/></svg>
<div class="abs" style="left:99.500px;top:611px;width:1.500px;height:23px;background:#2c2c2c"></div>
<svg class="ic" style="left:121.5px;top:610.5px;stroke:#d4d4d4;stroke-width:2.2;" viewBox="0 0 24 24"><path d="M8.500 4.500L3.500 9.500l5 5"/><path d="M4 9.500h11.500a5 5 0 0 1 0 10H12"/></svg>
<svg class="ic" style="left:169px;top:610.5px;stroke:#5e5e5e;stroke-width:2.2;" viewBox="0 0 24 24"><path d="M15.500 4.500l5 5-5 5"/><path d="M20 9.500H8.500a5 5 0 0 0 0 10H12"/></svg>
<svg class="ic" style="left:217px;top:610.5px;stroke:#d4d4d4;stroke-width:2.3;" viewBox="0 0 24 24"><path d="M3.500 7h17M8.500 7V5c0-1.100.9-2 2-2h3c1.100 0 2 .9 2 2v2M5.500 7v12c0 1.100.9 2 2 2h9c1.100 0 2-.9 2-2V7"/></svg>
<div class="abs" style="left:313px;top:601px;width:95px;height:43px;border-radius:12px;background:#282828"></div>
<div class="abs" style="left:317px;top:606px;width:39.500px;height:32.500px;border-radius:8px;background:#3b3b3b"></div>
<svg class="ic" style="left:324.5px;top:610.5px;stroke:#d4d4d4;stroke-width:2.1;" viewBox="0 0 24 24"><path d="M2.700 2.800L22.500 9 12.300 13.500 8.900 22z"/></svg>
<svg class="ic" style="left:370.5px;top:610.5px;stroke:#d4d4d4;stroke-width:2.1;" viewBox="0 0 24 24"><g transform="rotate(45 12 12)"><rect x="2.500" y="6" width="19" height="12" rx="3.500"/><path d="M8 12h8" stroke-width="2.600"/></g></svg>
<svg class="ic" style="left:422px;top:610.5px;stroke:#707070;stroke-width:2;" viewBox="0 0 24 24"><path d="M6.500 2.500L16.700 16M17.500 2.500L7.300 16"/><circle cx="6" cy="18.500" r="2.700"/><circle cx="18" cy="18.500" r="2.700"/></svg>
<svg class="ic" style="left:470.5px;top:610.5px;stroke:#d4d4d4;stroke-width:2.3;" viewBox="0 0 24 24"><path d="M5 6c0-1.100.9-2 2-2h10c1.100 0 2 .9 2 2v9.500L12 21.500 5 15.500z"/></svg>
<svg class="ic" style="left:574.5px;top:610.5px;stroke:#585858;stroke-width:2.2;" viewBox="0 0 24 24"><path d="M3 9v6M7 3v18M11 7v10M15 12h6"/></svg>
<i class="dot" style="left:595.200px;top:609.200px;width:4.800px;height:4.800px"></i>
<svg class="ic" style="left:622.5px;top:610.5px;stroke:#585858;stroke-width:2.1;" viewBox="0 0 24 24"><rect x="2" y="3.500" width="20" height="17" rx="2.500"/><path d="M10.500 9.800c-.6-.7-1.400-1-2.300-1-1.700 0-3 1.400-3 3.200s1.300 3.200 3 3.200c.9 0 1.700-.3 2.300-1M18.800 9.800c-.6-.7-1.400-1-2.300-1-1.700 0-3 1.400-3 3.200s1.300 3.200 3 3.200c.9 0 1.700-.3 2.300-1"/></svg>
<i class="dot" style="left:643.200px;top:609.200px;width:4.800px;height:4.800px"></i>
<svg class="ic" style="left:671px;top:610.5px;stroke:#d4d4d4;stroke-width:2.4;" viewBox="0 0 24 24"><path d="M6.800 2.500V17.200H21.500M2.500 6.800H17.200V21.500"/></svg>
<svg class="ic" style="left:718.5px;top:610.5px;stroke:#d4d4d4;stroke-width:2.2;" viewBox="0 0 24 24"><circle cx="12" cy="12" r="9.200"/><path d="M12 6.500a5.500 5.500 0 0 0 0 11z" fill="#d4d4d4" stroke="none"/></svg>
<svg class="ic" style="left:766.5px;top:610.5px;stroke:#d4d4d4;stroke-width:2.2;" viewBox="0 0 24 24"><path d="M3 7.500h5M13 7.500h8M3 16.500h10M18 16.500h3"/><circle cx="10.500" cy="7.500" r="2.400"/><circle cx="15.500" cy="16.500" r="2.400"/></svg>
<svg class="ic" style="left:815px;top:610.5px;stroke:#d4d4d4;stroke-width:2.2;" viewBox="0 0 24 24"><path d="M21 12V6.500c0-1-1-1.500-1.800-1L12 10.800 4.800 5.500c-.8-.5-1.800 0-1.800 1v11c0 1 1 1.500 1.800 1L12 13.200l1.500 1.100"/><path d="M18.500 15.500v6M15.500 18.500h6"/></svg>
<svg class="ic" style="left:1075px;top:610.5px;stroke:#d4d4d4;stroke-width:2.2;" viewBox="0 0 24 24"><path d="M9.500 3v18M9.500 7H6c-1.700 0-3 1.300-3 3v4c0 1.700 1.300 3 3 3h3.500M14 7h3c1.700 0 3 1.300 3 3v4c0 2.500-1.500 4-4 4"/></svg>
<i class="dot" style="left:1095.300px;top:608.700px;width:4.800px;height:4.800px"></i>
<svg class="ic" style="left:1123px;top:610.5px;stroke:#d4d4d4;stroke-width:2.2;" viewBox="0 0 24 24"><path d="M12 21a9 9 0 1 1 8.500-6c-.8 2.200-3.800 2.600-5 .8-1-1.500-.3-3.300.8-4.400 1.200-1.200 1.200-3.200-.3-4.200-1.800-1.200-4.500-.2-5.200 2.200-.8 2.600.6 5.400 3.200 6.300"/></svg>
<div class="abs" style="left:1167px;top:611px;width:1.500px;height:23px;background:#2a2a2a"></div>
<div class="abs" style="left:1193px;top:621.300px;width:15.500px;height:2.400px;border-radius:1px;background:#7a7a7a"></div>
<div class="abs" style="left:1226.500px;top:616.500px;width:127.500px;height:12.500px;border-radius:6px;background:#3c3c3c"></div>
<div class="abs" style="left:1301.500px;top:616.500px;width:16px;height:12.500px;border-radius:5px;background:#dcdcdc"></div>
<div class="abs" style="left:1371.500px;top:621.300px;width:17.500px;height:2.400px;border-radius:1px;background:#a4a4a4"></div><div class="abs" style="left:1379px;top:613.800px;width:2.400px;height:17.500px;border-radius:1px;background:#a4a4a4"></div>
<div class="abs" style="left:1458px;top:601px;width:141.500px;height:43px;border-radius:14px;background:#0038f5"><span style="position:absolute;left:15.500px;top:11.500px;font:bold 13.600px/20px 'DejaVu Sans','Liberation Sans',sans-serif;color:#fff;letter-spacing:-.3px">Exportar</span><i style="position:absolute;left:96px;top:11px;width:1.500px;height:21px;background:#5a7df8"></i><svg class="ic" style="left:111.500px;top:14px;width:16px;height:16px;stroke:#fff;stroke-width:2.800" viewBox="0 0 16 16"><path d="M3.500 5.500L8 10l4.500-4.500"/></svg></div>
<div class="rl" style="left:51.0px">00:00:00</div>
<div class="rl" style="left:177.6px">00:00:04</div>
<div class="rl" style="left:304.3px">00:00:08</div>
<div class="rl" style="left:430.9px">00:00:12</div>
<div class="rl" style="left:557.6px">00:00:16</div>
<div class="rl" style="left:684.2px">00:00:20</div>
<div class="rl" style="left:810.8px">00:00:24</div>
<div class="rl" style="left:937.5px">00:00:28</div>
<div class="rl" style="left:1064.1px">00:00:32</div>
<div class="rl" style="left:1190.8px">00:00:36</div>
<div class="rl" style="left:1317.4px">00:00:40</div>
<div class="rl" style="left:1444.0px">00:00:44</div>
<svg class="abs" style="left:0;top:0;width:1616px;height:700px;pointer-events:none" viewBox="0 0 1616 700"><rect x="50.70" y="677" width="1.600" height="8" fill="#8c8c8c"/><rect x="76.13" y="682" width="1.400" height="2.500" fill="#5a5a5a"/><rect x="101.46" y="682" width="1.400" height="2.500" fill="#5a5a5a"/><rect x="126.78" y="682" width="1.400" height="2.500" fill="#5a5a5a"/><rect x="152.11" y="682" width="1.400" height="2.500" fill="#5a5a5a"/><rect x="177.34" y="677" width="1.600" height="8" fill="#8c8c8c"/><rect x="202.77" y="682" width="1.400" height="2.500" fill="#5a5a5a"/><rect x="228.10" y="682" width="1.400" height="2.500" fill="#5a5a5a"/><rect x="253.42" y="682" width="1.400" height="2.500" fill="#5a5a5a"/><rect x="278.75" y="682" width="1.400" height="2.500" fill="#5a5a5a"/><rect x="303.98" y="677" width="1.600" height="8" fill="#8c8c8c"/><rect x="329.41" y="682" width="1.400" height="2.500" fill="#5a5a5a"/><rect x="354.74" y="682" width="1.400" height="2.500" fill="#5a5a5a"/><rect x="380.06" y="682" width="1.400" height="2.500" fill="#5a5a5a"/><rect x="405.39" y="682" width="1.400" height="2.500" fill="#5a5a5a"/><rect x="430.62" y="677" width="1.600" height="8" fill="#8c8c8c"/><rect x="456.05" y="682" width="1.400" height="2.500" fill="#5a5a5a"/><rect x="481.38" y="682" width="1.400" height="2.500" fill="#5a5a5a"/><rect x="506.70" y="682" width="1.400" height="2.500" fill="#5a5a5a"/><rect x="532.03" y="682" width="1.400" height="2.500" fill="#5a5a5a"/><rect x="557.26" y="677" width="1.600" height="8" fill="#8c8c8c"/><rect x="582.69" y="682" width="1.400" height="2.500" fill="#5a5a5a"/><rect x="608.02" y="682" width="1.400" height="2.500" fill="#5a5a5a"/><rect x="633.34" y="682" width="1.400" height="2.500" fill="#5a5a5a"/><rect x="658.67" y="682" width="1.400" height="2.500" fill="#5a5a5a"/><rect x="683.90" y="677" width="1.600" height="8" fill="#8c8c8c"/><rect x="709.33" y="682" width="1.400" height="2.500" fill="#5a5a5a"/><rect x="734.66" y="682" width="1.400" height="2.500" fill="#5a5a5a"/><rect x="759.98" y="682" width="1.400" height="2.500" fill="#5a5a5a"/><rect x="785.31" y="682" width="1.400" height="2.500" fill="#5a5a5a"/><rect x="810.54" y="677" width="1.600" height="8" fill="#8c8c8c"/><rect x="835.97" y="682" width="1.400" height="2.500" fill="#5a5a5a"/><rect x="861.30" y="682" width="1.400" height="2.500" fill="#5a5a5a"/><rect x="886.62" y="682" width="1.400" height="2.500" fill="#5a5a5a"/><rect x="911.95" y="682" width="1.400" height="2.500" fill="#5a5a5a"/><rect x="937.18" y="677" width="1.600" height="8" fill="#8c8c8c"/><rect x="962.61" y="682" width="1.400" height="2.500" fill="#5a5a5a"/><rect x="987.94" y="682" width="1.400" height="2.500" fill="#5a5a5a"/><rect x="1013.26" y="682" width="1.400" height="2.500" fill="#5a5a5a"/><rect x="1038.59" y="682" width="1.400" height="2.500" fill="#5a5a5a"/><rect x="1063.82" y="677" width="1.600" height="8" fill="#8c8c8c"/><rect x="1089.25" y="682" width="1.400" height="2.500" fill="#5a5a5a"/><rect x="1114.58" y="682" width="1.400" height="2.500" fill="#5a5a5a"/><rect x="1139.90" y="682" width="1.400" height="2.500" fill="#5a5a5a"/><rect x="1165.23" y="682" width="1.400" height="2.500" fill="#5a5a5a"/><rect x="1190.46" y="677" width="1.600" height="8" fill="#8c8c8c"/><rect x="1215.89" y="682" width="1.400" height="2.500" fill="#5a5a5a"/><rect x="1241.22" y="682" width="1.400" height="2.500" fill="#5a5a5a"/><rect x="1266.54" y="682" width="1.400" height="2.500" fill="#5a5a5a"/><rect x="1291.87" y="682" width="1.400" height="2.500" fill="#5a5a5a"/><rect x="1317.10" y="677" width="1.600" height="8" fill="#8c8c8c"/><rect x="1342.53" y="682" width="1.400" height="2.500" fill="#5a5a5a"/><rect x="1367.86" y="682" width="1.400" height="2.500" fill="#5a5a5a"/><rect x="1393.18" y="682" width="1.400" height="2.500" fill="#5a5a5a"/><rect x="1418.51" y="682" width="1.400" height="2.500" fill="#5a5a5a"/><rect x="1443.74" y="677" width="1.600" height="8" fill="#8c8c8c"/><rect x="1469.17" y="682" width="1.400" height="2.500" fill="#5a5a5a"/><rect x="1494.50" y="682" width="1.400" height="2.500" fill="#5a5a5a"/><rect x="1519.82" y="682" width="1.400" height="2.500" fill="#5a5a5a"/></svg>
<div class="trk" style="top:695px;background:#282828"><i style="background:#353535"></i></div>
<div class="trk" style="top:768px;height:72px;background:#1f1f1f"><i style="background:#353a5a;height:72px"></i></div>
<div class="trk" style="top:842.500px;background:#2a2a2a"><i style="background:#28483f"></i></div>
<svg class="ic" style="left:19.75px;top:708.25px;width:16.5px;height:16.5px;stroke:#bdbdbd;stroke-width:2.3" viewBox="0 0 24 24"><path d="M2 12c2.500-4.500 6-6.500 10-6.500s7.500 2 10 6.500c-2.500 4.500-6 6.500-10 6.500s-7.500-2-10-6.500z"/><circle cx="12" cy="12" r="2.800"/></svg>
<svg class="ic" style="left:19px;top:735.5px;width:18px;height:18px;stroke:#bdbdbd;stroke-width:2.4" viewBox="0 0 24 24"><path d="M9.500 7H8a5 5 0 0 0 0 10h1.500M14.500 7H16a5 5 0 0 1 0 10h-1.500M8.500 12h7"/></svg>
<svg class="ic" style="left:19.75px;top:781.75px;width:16.5px;height:16.5px;stroke:#a4acf4;stroke-width:2.3" viewBox="0 0 24 24"><path d="M2 12c2.500-4.500 6-6.500 10-6.500s7.500 2 10 6.500c-2.500 4.500-6 6.500-10 6.500s-7.500-2-10-6.500z"/><circle cx="12" cy="12" r="2.800"/></svg>
<svg class="ic" style="left:19px;top:809px;width:18px;height:18px;stroke:#a4acf4;stroke-width:2" viewBox="0 0 24 24"><path d="M4 12h16M12 3v3M12 18v3M5.500 5.500l2 2M18.500 5.500l-2 2M5.500 18.500l2-2M18.500 18.500l-2-2" /><rect x="5" y="10" width="14" height="4" rx="1.500" fill="#a4acf4"/></svg>
<svg class="ic" style="left:19px;top:854px;width:18px;height:18px;stroke:#58d0ae;stroke-width:2.2" viewBox="0 0 24 24"><path d="M3 9.500v5h3.500L11 18.500v-13L6.500 9.500z"/><path d="M14.500 9a4.500 4.500 0 0 1 0 6M17.500 6.500a8.500 8.500 0 0 1 0 11"/></svg>
<svg class="ic" style="left:19px;top:882px;width:18px;height:18px;stroke:#58d0ae;stroke-width:2.4" viewBox="0 0 24 24"><path d="M9.500 7H8a5 5 0 0 0 0 10h1.500M14.500 7H16a5 5 0 0 1 0 10h-1.500M8.500 12h7"/><path d="M4 4l16 16"/></svg>
<div class="clip" style="left:51.0px;width:124.500px"><span>RS16105_shutterstock</span><div class="im"><svg width="118.5" height="38" viewBox="0 0 118.5 38" style="position:absolute;left:0;top:0;background:#b8b848"><g transform="translate(0.0 0)"><rect width="54.500" height="38" fill="#b8b848"/><rect width="22" height="38" fill="#c6c650"/><path d="M6 38c2-8 10-12 20-12s20 4 24 12z" fill="#8a62c4"/><path d="M8 34h40M12 30h32" stroke="#c98ad8" stroke-width="1.200"/><ellipse cx="28" cy="17" rx="7" ry="8.500" fill="#d6a070"/><path d="M21 19c1 6 4 9 7 9s6-3 7-9c-2 3-12 3-14 0z" fill="#6a4428"/><path d="M19 13c0-7 4-11 9-11s9 4 9 11c-5-2-13-2-18 0z" fill="#246ad8"/><rect x="21" y="14.500" width="14" height="4" rx="2" fill="#2a1c10"/><path d="M10 26c0-5 4-10 9-9l2 4-5 8z" fill="#cf9868"/><path d="M4 38c0-6 3-11 8-13l5 5-3 8z" fill="#8058ba"/></g><g transform="translate(54.5 0)"><rect width="54.500" height="38" fill="#b8b848"/><rect width="22" height="38" fill="#c6c650"/><path d="M6 38c2-8 10-12 20-12s20 4 24 12z" fill="#8a62c4"/><path d="M8 34h40M12 30h32" stroke="#c98ad8" stroke-width="1.200"/><ellipse cx="28" cy="17" rx="7" ry="8.500" fill="#d6a070"/><path d="M21 19c1 6 4 9 7 9s6-3 7-9c-2 3-12 3-14 0z" fill="#6a4428"/><path d="M19 13c0-7 4-11 9-11s9 4 9 11c-5-2-13-2-18 0z" fill="#246ad8"/><rect x="21" y="14.500" width="14" height="4" rx="2" fill="#2a1c10"/><path d="M10 26c0-5 4-10 9-9l2 4-5 8z" fill="#cf9868"/><path d="M4 38c0-6 3-11 8-13l5 5-3 8z" fill="#8058ba"/></g><g transform="translate(109.0 0)"><rect width="54.500" height="38" fill="#b8b848"/><rect width="22" height="38" fill="#c6c650"/><path d="M6 38c2-8 10-12 20-12s20 4 24 12z" fill="#8a62c4"/><path d="M8 34h40M12 30h32" stroke="#c98ad8" stroke-width="1.200"/><ellipse cx="28" cy="17" rx="7" ry="8.500" fill="#d6a070"/><path d="M21 19c1 6 4 9 7 9s6-3 7-9c-2 3-12 3-14 0z" fill="#6a4428"/><path d="M19 13c0-7 4-11 9-11s9 4 9 11c-5-2-13-2-18 0z" fill="#246ad8"/><rect x="21" y="14.500" width="14" height="4" rx="2" fill="#2a1c10"/><path d="M10 26c0-5 4-10 9-9l2 4-5 8z" fill="#cf9868"/><path d="M4 38c0-6 3-11 8-13l5 5-3 8z" fill="#8058ba"/></g></svg></div></div>
<div class="clip" style="left:177.6px;width:124.500px"><span>RS16114_shutterstock</span><div class="im"><svg width="118.5" height="38" viewBox="0 0 118.5 38" style="position:absolute;left:0;top:0;background:#12a6e6"><g transform="translate(0.0 0)"><rect width="54.500" height="38" fill="#12a6e6"/><path d="M18 24c-5-3-9-9-8-15l3-1c0 5 3 9 8 12zM36 24c5-3 9-9 8-15l-3-1c0 5-3 9-8 12z" fill="#e6b090"/><path d="M15 38c0-10 4-17 12-17s12 7 12 17z" fill="#e6781c"/><path d="M19 28l3 3M30 26l3 4M24 33l4 2M33 34l2 3" stroke="#2f8a3a" stroke-width="1.800"/><circle cx="27" cy="10.500" r="6.200" fill="#5a3220"/><ellipse cx="27" cy="13" rx="4" ry="5" fill="#e2aa88"/></g><g transform="translate(54.5 0)"><rect width="54.500" height="38" fill="#12a6e6"/><path d="M18 24c-5-3-9-9-8-15l3-1c0 5 3 9 8 12zM36 24c5-3 9-9 8-15l-3-1c0 5-3 9-8 12z" fill="#e6b090"/><path d="M15 38c0-10 4-17 12-17s12 7 12 17z" fill="#e6781c"/><path d="M19 28l3 3M30 26l3 4M24 33l4 2M33 34l2 3" stroke="#2f8a3a" stroke-width="1.800"/><circle cx="27" cy="10.500" r="6.200" fill="#5a3220"/><ellipse cx="27" cy="13" rx="4" ry="5" fill="#e2aa88"/></g><g transform="translate(109.0 0)"><rect width="54.500" height="38" fill="#12a6e6"/><path d="M18 24c-5-3-9-9-8-15l3-1c0 5 3 9 8 12zM36 24c5-3 9-9 8-15l-3-1c0 5-3 9-8 12z" fill="#e6b090"/><path d="M15 38c0-10 4-17 12-17s12 7 12 17z" fill="#e6781c"/><path d="M19 28l3 3M30 26l3 4M24 33l4 2M33 34l2 3" stroke="#2f8a3a" stroke-width="1.800"/><circle cx="27" cy="10.500" r="6.200" fill="#5a3220"/><ellipse cx="27" cy="13" rx="4" ry="5" fill="#e2aa88"/></g></svg></div></div>
<div class="clip" style="left:304.3px;width:124.500px"><span>RS16115_shutterstock</span><div class="im"><svg width="118.5" height="38" viewBox="0 0 118.5 38" style="position:absolute;left:0;top:0;background:#b0d4f4"><g transform="translate(0.0 0)"><defs><linearGradient id="c3g" x1="0" y1="0" x2="0" y2="1"><stop offset="0" stop-color="#92c4f0"/><stop offset="1" stop-color="#d4e8fa"/></linearGradient></defs><rect width="54.500" height="38" fill="url(#c3g)"/><path d="M10 38c1-8 8-13 22-13s18 5 19 13z" fill="#f4f4f4"/><path d="M10 38c1-5 4-9 8-11l4 11z" fill="#ee7424"/><path d="M22 27l8 0 2 11-8 0z" fill="#2352c4"/><path d="M34 27l6 2 2 9h-6z" fill="#d8342c"/><path d="M42 29l6 4 3 5h-7z" fill="#2a5ed0"/><path d="M17 29l5-2 1 6-5 1z" fill="#3aa046"/><rect x="30" y="19" width="6" height="8" fill="#d8a078"/><ellipse cx="33" cy="13.500" rx="6" ry="7.500" fill="#dca680"/><path d="M27 10c0-5 3-8 7-8s6 3 6 7c-4-2-9-2-13 1z" fill="#b86e30"/><path d="M28.500 12.500h9" stroke="#5a3a28" stroke-width="1.300"/></g><g transform="translate(54.5 0)"><defs><linearGradient id="c3g" x1="0" y1="0" x2="0" y2="1"><stop offset="0" stop-color="#92c4f0"/><stop offset="1" stop-color="#d4e8fa"/></linearGradient></defs><rect width="54.500" height="38" fill="url(#c3g)"/><path d="M10 38c1-8 8-13 22-13s18 5 19 13z" fill="#f4f4f4"/><path d="M10 38c1-5 4-9 8-11l4 11z" fill="#ee7424"/><path d="M22 27l8 0 2 11-8 0z" fill="#2352c4"/><path d="M34 27l6 2 2 9h-6z" fill="#d8342c"/><path d="M42 29l6 4 3 5h-7z" fill="#2a5ed0"/><path d="M17 29l5-2 1 6-5 1z" fill="#3aa046"/><rect x="30" y="19" width="6" height="8" fill="#d8a078"/><ellipse cx="33" cy="13.500" rx="6" ry="7.500" fill="#dca680"/><path d="M27 10c0-5 3-8 7-8s6 3 6 7c-4-2-9-2-13 1z" fill="#b86e30"/><path d="M28.500 12.500h9" stroke="#5a3a28" stroke-width="1.300"/></g><g transform="translate(109.0 0)"><defs><linearGradient id="c3g" x1="0" y1="0" x2="0" y2="1"><stop offset="0" stop-color="#92c4f0"/><stop offset="1" stop-color="#d4e8fa"/></linearGradient></defs><rect width="54.500" height="38" fill="url(#c3g)"/><path d="M10 38c1-8 8-13 22-13s18 5 19 13z" fill="#f4f4f4"/><path d="M10 38c1-5 4-9 8-11l4 11z" fill="#ee7424"/><path d="M22 27l8 0 2 11-8 0z" fill="#2352c4"/><path d="M34 27l6 2 2 9h-6z" fill="#d8342c"/><path d="M42 29l6 4 3 5h-7z" fill="#2a5ed0"/><path d="M17 29l5-2 1 6-5 1z" fill="#3aa046"/><rect x="30" y="19" width="6" height="8" fill="#d8a078"/><ellipse cx="33" cy="13.500" rx="6" ry="7.500" fill="#dca680"/><path d="M27 10c0-5 3-8 7-8s6 3 6 7c-4-2-9-2-13 1z" fill="#b86e30"/><path d="M28.500 12.500h9" stroke="#5a3a28" stroke-width="1.300"/></g></svg></div></div>
<div class="clip sel" style="left:430.9px;width:125px" id="clipsel"><b class="fx"><em>f</em>x · 1</b><span style="left:57px;width:57px">RS1030_shutterstock</span><div class="im"><svg width="118.5" height="38" viewBox="0 0 118.5 38" style="position:absolute;left:0;top:0;background:#dde6ee"><g transform="translate(-26.0 0)"><rect width="54.500" height="38" fill="#dde6ee"/><path d="M0 0h7l5 38H0z" fill="#8fb6ea"/><g fill="#8aa2c4"><circle cx="24" cy="5" r="1"/><circle cx="30" cy="9" r="1"/><circle cx="36" cy="4" r="1"/><circle cx="42" cy="10" r="1"/><circle cx="48" cy="5" r="1"/><circle cx="26" cy="16" r="1"/><circle cx="44" cy="18" r="1"/><circle cx="50" cy="14" r="1"/><circle cx="24" cy="26" r="1"/><circle cx="48" cy="26" r="1"/><circle cx="44" cy="32" r="1"/><circle cx="22" cy="34" r="1"/><circle cx="38" cy="14" r="1"/><circle cx="32" cy="22" r="1"/></g><path d="M26 38c-1-8 0-14 3-18l-5-9 3-2 6 8h5l6-10 3 2-5 12c3 4 4 10 3 17z" fill="#109868"/><circle cx="35" cy="13" r="3.600" fill="#8a5a48"/><path d="M22 10l3-1 1 3-3 1zM46 7l3 1-1 3-3-1z" fill="#dca888"/></g><g transform="translate(28.5 0)"><rect width="54.500" height="38" fill="#dde6ee"/><path d="M0 0h7l5 38H0z" fill="#8fb6ea"/><g fill="#8aa2c4"><circle cx="24" cy="5" r="1"/><circle cx="30" cy="9" r="1"/><circle cx="36" cy="4" r="1"/><circle cx="42" cy="10" r="1"/><circle cx="48" cy="5" r="1"/><circle cx="26" cy="16" r="1"/><circle cx="44" cy="18" r="1"/><circle cx="50" cy="14" r="1"/><circle cx="24" cy="26" r="1"/><circle cx="48" cy="26" r="1"/><circle cx="44" cy="32" r="1"/><circle cx="22" cy="34" r="1"/><circle cx="38" cy="14" r="1"/><circle cx="32" cy="22" r="1"/></g><path d="M26 38c-1-8 0-14 3-18l-5-9 3-2 6 8h5l6-10 3 2-5 12c3 4 4 10 3 17z" fill="#109868"/><circle cx="35" cy="13" r="3.600" fill="#8a5a48"/><path d="M22 10l3-1 1 3-3 1zM46 7l3 1-1 3-3-1z" fill="#dca888"/></g><g transform="translate(83.0 0)"><rect width="54.500" height="38" fill="#dde6ee"/><path d="M0 0h7l5 38H0z" fill="#8fb6ea"/><g fill="#8aa2c4"><circle cx="24" cy="5" r="1"/><circle cx="30" cy="9" r="1"/><circle cx="36" cy="4" r="1"/><circle cx="42" cy="10" r="1"/><circle cx="48" cy="5" r="1"/><circle cx="26" cy="16" r="1"/><circle cx="44" cy="18" r="1"/><circle cx="50" cy="14" r="1"/><circle cx="24" cy="26" r="1"/><circle cx="48" cy="26" r="1"/><circle cx="44" cy="32" r="1"/><circle cx="22" cy="34" r="1"/><circle cx="38" cy="14" r="1"/><circle cx="32" cy="22" r="1"/></g><path d="M26 38c-1-8 0-14 3-18l-5-9 3-2 6 8h5l6-10 3 2-5 12c3 4 4 10 3 17z" fill="#109868"/><circle cx="35" cy="13" r="3.600" fill="#8a5a48"/><path d="M22 10l3-1 1 3-3 1zM46 7l3 1-1 3-3-1z" fill="#dca888"/></g></svg></div></div>
<div class="clip" style="left:557.6px;width:124.500px"><span>RS1038_shutterstock</span><div class="im"><svg width="118.5" height="38" viewBox="0 0 118.5 38" style="position:absolute;left:0;top:0;background:#abc9c6"><g transform="translate(0.0 0)"><rect width="54.500" height="38" fill="#abc9c6"/><path d="M17 38c0-8 2-12 6-14h9c4 2 6 6 6 14z" fill="#ecc8ac"/><rect x="24.500" y="17" width="6" height="8" fill="#e6bea0"/><path d="M18 35h19v3H18z" fill="#131c48"/><ellipse cx="27.500" cy="15.500" rx="4.200" ry="5" fill="#e8c2a4"/><rect x="25.500" y="18" width="4" height="1.500" rx=".7" fill="#c8202c"/><ellipse cx="27.500" cy="11.500" rx="17.500" ry="5.500" fill="#0f1a4a"/><ellipse cx="27.500" cy="7.500" rx="8" ry="6" fill="#131f55"/></g><g transform="translate(54.5 0)"><rect width="54.500" height="38" fill="#abc9c6"/><path d="M17 38c0-8 2-12 6-14h9c4 2 6 6 6 14z" fill="#ecc8ac"/><rect x="24.500" y="17" width="6" height="8" fill="#e6bea0"/><path d="M18 35h19v3H18z" fill="#131c48"/><ellipse cx="27.500" cy="15.500" rx="4.200" ry="5" fill="#e8c2a4"/><rect x="25.500" y="18" width="4" height="1.500" rx=".7" fill="#c8202c"/><ellipse cx="27.500" cy="11.500" rx="17.500" ry="5.500" fill="#0f1a4a"/><ellipse cx="27.500" cy="7.500" rx="8" ry="6" fill="#131f55"/></g><g transform="translate(109.0 0)"><rect width="54.500" height="38" fill="#abc9c6"/><path d="M17 38c0-8 2-12 6-14h9c4 2 6 6 6 14z" fill="#ecc8ac"/><rect x="24.500" y="17" width="6" height="8" fill="#e6bea0"/><path d="M18 35h19v3H18z" fill="#131c48"/><ellipse cx="27.500" cy="15.500" rx="4.200" ry="5" fill="#e8c2a4"/><rect x="25.500" y="18" width="4" height="1.500" rx=".7" fill="#c8202c"/><ellipse cx="27.500" cy="11.500" rx="17.500" ry="5.500" fill="#0f1a4a"/><ellipse cx="27.500" cy="7.500" rx="8" ry="6" fill="#131f55"/></g></svg></div></div>
<div class="clip" style="left:684.2px;width:124.500px"><span>RS16028_shutterstock</span><div class="im"><svg width="118.5" height="38" viewBox="0 0 118.5 38" style="position:absolute;left:0;top:0;background:#1a9ae8"><g transform="translate(0.0 0)"><rect width="54.500" height="38" fill="#1a9ae8"/><g fill="#c4e6fa" opacity=".85"><ellipse cx="8" cy="6" rx="9" ry="4"/><ellipse cx="44" cy="4" rx="10" ry="3"/><ellipse cx="10" cy="34" rx="12" ry="5"/><ellipse cx="46" cy="34" rx="9" ry="5"/></g><path d="M19 38l1-10h14l2 10z" fill="#f0f4f8"/><path d="M18 14c2-3 14-3 16 0l1 15H18z" fill="#e8f0f0"/><path d="M20 17h5v4h-5zM27 15h5v5h-5zM22 23h6v4h-6zM29 22h4v5h-4z" fill="#2aa6a0"/><path d="M25 17h2v4h-2zM20 22h2v4h-2zM28 27h4v2h-4z" fill="#ee7a2c"/><path d="M33 15c3-1 6-4 6-8l-2-1c-1 3-3 5-6 6z" fill="#e2b090"/><ellipse cx="27" cy="9" rx="3.800" ry="4.600" fill="#e4b494"/><path d="M22.500 8c0-4 2-6 5-6s4 2 4 5c-3-1-6-1-9 1z" fill="#e2c070"/></g><g transform="translate(54.5 0)"><rect width="54.500" height="38" fill="#1a9ae8"/><g fill="#c4e6fa" opacity=".85"><ellipse cx="8" cy="6" rx="9" ry="4"/><ellipse cx="44" cy="4" rx="10" ry="3"/><ellipse cx="10" cy="34" rx="12" ry="5"/><ellipse cx="46" cy="34" rx="9" ry="5"/></g><path d="M19 38l1-10h14l2 10z" fill="#f0f4f8"/><path d="M18 14c2-3 14-3 16 0l1 15H18z" fill="#e8f0f0"/><path d="M20 17h5v4h-5zM27 15h5v5h-5zM22 23h6v4h-6zM29 22h4v5h-4z" fill="#2aa6a0"/><path d="M25 17h2v4h-2zM20 22h2v4h-2zM28 27h4v2h-4z" fill="#ee7a2c"/><path d="M33 15c3-1 6-4 6-8l-2-1c-1 3-3 5-6 6z" fill="#e2b090"/><ellipse cx="27" cy="9" rx="3.800" ry="4.600" fill="#e4b494"/><path d="M22.500 8c0-4 2-6 5-6s4 2 4 5c-3-1-6-1-9 1z" fill="#e2c070"/></g><g transform="translate(109.0 0)"><rect width="54.500" height="38" fill="#1a9ae8"/><g fill="#c4e6fa" opacity=".85"><ellipse cx="8" cy="6" rx="9" ry="4"/><ellipse cx="44" cy="4" rx="10" ry="3"/><ellipse cx="10" cy="34" rx="12" ry="5"/><ellipse cx="46" cy="34" rx="9" ry="5"/></g><path d="M19 38l1-10h14l2 10z" fill="#f0f4f8"/><path d="M18 14c2-3 14-3 16 0l1 15H18z" fill="#e8f0f0"/><path d="M20 17h5v4h-5zM27 15h5v5h-5zM22 23h6v4h-6zM29 22h4v5h-4z" fill="#2aa6a0"/><path d="M25 17h2v4h-2zM20 22h2v4h-2zM28 27h4v2h-4z" fill="#ee7a2c"/><path d="M33 15c3-1 6-4 6-8l-2-1c-1 3-3 5-6 6z" fill="#e2b090"/><ellipse cx="27" cy="9" rx="3.800" ry="4.600" fill="#e4b494"/><path d="M22.500 8c0-4 2-6 5-6s4 2 4 5c-3-1-6-1-9 1z" fill="#e2c070"/></g></svg></div></div>
<div class="clip" style="left:810.8px;width:124.500px"><span>RS16059_shutterstock</span><div class="im"><svg width="118.5" height="38" viewBox="0 0 118.5 38" style="position:absolute;left:0;top:0;background:#0a7ad8"><g transform="translate(0.0 0)"><rect width="54.500" height="38" fill="#0a7ad8"/><rect width="18" height="38" fill="#0a82e0"/><path d="M6 38c0-10 4-18 10-22 4-3 12-3 16 0 6 4 8 12 8 22z" fill="#0a1a3e"/><path d="M14 38c2-6 6-9 10-9s8 3 10 9z" fill="#0c2a5a"/><path d="M1 19c6-5 18-10 30-8l2 5c-10-2-22 2-32 8z" fill="#f2a81c"/><path d="M14 13c5-2 11-3 17-2l1 3c-6-1-12 0-17 2z" fill="#f6c83a"/><ellipse cx="24" cy="9" rx="9" ry="5" fill="#0a1a3e"/></g><g transform="translate(54.5 0)"><rect width="54.500" height="38" fill="#0a7ad8"/><rect width="18" height="38" fill="#0a82e0"/><path d="M6 38c0-10 4-18 10-22 4-3 12-3 16 0 6 4 8 12 8 22z" fill="#0a1a3e"/><path d="M14 38c2-6 6-9 10-9s8 3 10 9z" fill="#0c2a5a"/><path d="M1 19c6-5 18-10 30-8l2 5c-10-2-22 2-32 8z" fill="#f2a81c"/><path d="M14 13c5-2 11-3 17-2l1 3c-6-1-12 0-17 2z" fill="#f6c83a"/><ellipse cx="24" cy="9" rx="9" ry="5" fill="#0a1a3e"/></g><g transform="translate(109.0 0)"><rect width="54.500" height="38" fill="#0a7ad8"/><rect width="18" height="38" fill="#0a82e0"/><path d="M6 38c0-10 4-18 10-22 4-3 12-3 16 0 6 4 8 12 8 22z" fill="#0a1a3e"/><path d="M14 38c2-6 6-9 10-9s8 3 10 9z" fill="#0c2a5a"/><path d="M1 19c6-5 18-10 30-8l2 5c-10-2-22 2-32 8z" fill="#f2a81c"/><path d="M14 13c5-2 11-3 17-2l1 3c-6-1-12 0-17 2z" fill="#f6c83a"/><ellipse cx="24" cy="9" rx="9" ry="5" fill="#0a1a3e"/></g></svg></div></div>
<div class="abs" style="left:400px;top:799.500px;width:61px;height:35.500px;background:rgba(86,90,98,.92);border:1px solid rgba(150,150,150,.55)"><svg style="position:absolute;left:0;top:0" width="59" height="33.500" viewBox="0 0 59 33.500"><path d="M1 .5L28.500 16.750 1 33z" fill="#a9a9a9"/><path d="M58 .5L33 16.750 58 33z" fill="#8b8b8b"/></svg></div>
<div class="abs" style="left:431px;top:768px;width:125px;height:71.500px;border:2px solid #eef0fb;border-radius:7px"></div>
<div class="abs" style="left:443.500px;top:660px;width:2.200px;height:294px;background:#e8741c"></div>
<svg class="abs" style="left:436px;top:654px;width:18px;height:20px" viewBox="0 0 18 20"><path d="M2.200 2h13.200v7.500L8.800 17 2.200 9.500z" fill="rgba(232,116,28,.35)" stroke="#e8741c" stroke-width="2" stroke-linejoin="round"/></svg>
<div class="abs" id="scroll"></div>
<div class="abs" id="status">Duración del proyecto: 00:28</div>
<div class="abs" style="left:1530px;width:33.500px;top:706.4px;text-align:right;font:9.500px/12px 'DejaVu Sans','Liberation Sans',sans-serif;color:#6e6e6e">0</div><div class="abs" style="left:1568px;top:710.9px;width:1px;height:2px;background:#666"></div>
<div class="abs" style="left:1530px;width:33.500px;top:734.3px;text-align:right;font:9.500px/12px 'DejaVu Sans','Liberation Sans',sans-serif;color:#6e6e6e">-5</div><div class="abs" style="left:1568px;top:738.8px;width:1px;height:2px;background:#666"></div>
<div class="abs" style="left:1530px;width:33.500px;top:762.0px;text-align:right;font:9.500px/12px 'DejaVu Sans','Liberation Sans',sans-serif;color:#6e6e6e">-10</div><div class="abs" style="left:1568px;top:766.5px;width:1px;height:2px;background:#666"></div>
<div class="abs" style="left:1530px;width:33.500px;top:790.0px;text-align:right;font:9.500px/12px 'DejaVu Sans','Liberation Sans',sans-serif;color:#6e6e6e">-15</div><div class="abs" style="left:1568px;top:794.5px;width:1px;height:2px;background:#666"></div>
<div class="abs" style="left:1530px;width:33.500px;top:818.0px;text-align:right;font:9.500px/12px 'DejaVu Sans','Liberation Sans',sans-serif;color:#6e6e6e">-20</div><div class="abs" style="left:1568px;top:822.5px;width:1px;height:2px;background:#666"></div>
<div class="abs" style="left:1530px;width:33.500px;top:849.6px;text-align:right;font:9.500px/12px 'DejaVu Sans','Liberation Sans',sans-serif;color:#6e6e6e">-30</div><div class="abs" style="left:1568px;top:854.1px;width:1px;height:2px;background:#666"></div>
<div class="abs" style="left:1530px;width:33.500px;top:881.0px;text-align:right;font:9.500px/12px 'DejaVu Sans','Liberation Sans',sans-serif;color:#6e6e6e">-40</div><div class="abs" style="left:1568px;top:885.5px;width:1px;height:2px;background:#666"></div>
<div class="abs" style="left:1530px;width:33.500px;top:913.0px;text-align:right;font:9.500px/12px 'DejaVu Sans','Liberation Sans',sans-serif;color:#6e6e6e">-50</div><div class="abs" style="left:1568px;top:917.5px;width:1px;height:2px;background:#666"></div>
<div class="abs" style="left:1530px;width:33.500px;top:931.0px;text-align:right;font:9.500px/12px 'DejaVu Sans','Liberation Sans',sans-serif;color:#6e6e6e">-60</div><div class="abs" style="left:1568px;top:935.5px;width:1px;height:2px;background:#666"></div>
<svg class="abs" style="left:0;top:0;width:1616px;height:1006px;pointer-events:none" viewBox="0 0 1616 1006"><rect x="1574" y="697" width="10.800" height="3.400" fill="#343434"/><rect x="1574" y="710.6" width="10.800" height="3.400" fill="#383838"/><rect x="1574" y="716.9" width="10.800" height="3.400" fill="#383838"/><rect x="1574" y="723.2" width="10.800" height="3.400" fill="#383838"/><rect x="1574" y="729.6" width="10.800" height="3.400" fill="#383838"/><rect x="1574" y="735.9" width="10.800" height="3.400" fill="#383838"/><rect x="1574" y="742.2" width="10.800" height="3.400" fill="#383838"/><rect x="1574" y="748.5" width="10.800" height="3.400" fill="#383838"/><rect x="1574" y="754.8" width="10.800" height="3.400" fill="#383838"/><rect x="1574" y="761.2" width="10.800" height="3.400" fill="#383838"/><rect x="1574" y="767.5" width="10.800" height="3.400" fill="#383838"/><rect x="1574" y="773.8" width="10.800" height="3.400" fill="#383838"/><rect x="1574" y="780.1" width="10.800" height="3.400" fill="#383838"/><rect x="1574" y="786.4" width="10.800" height="3.400" fill="#383838"/><rect x="1574" y="792.8" width="10.800" height="3.400" fill="#383838"/><rect x="1574" y="799.1" width="10.800" height="3.400" fill="#383838"/><rect x="1574" y="805.4" width="10.800" height="3.400" fill="#383838"/><rect x="1574" y="811.7" width="10.800" height="3.400" fill="#383838"/><rect x="1574" y="818.0" width="10.800" height="3.400" fill="#383838"/><rect x="1574" y="824.4" width="10.800" height="3.400" fill="#383838"/><rect x="1574" y="830.7" width="10.800" height="3.400" fill="#383838"/><rect x="1574" y="837.0" width="10.800" height="3.400" fill="#383838"/><rect x="1574" y="843.3" width="10.800" height="3.400" fill="#383838"/><rect x="1574" y="849.6" width="10.800" height="3.400" fill="#383838"/><rect x="1574" y="856.0" width="10.800" height="3.400" fill="#383838"/><rect x="1574" y="862.3" width="10.800" height="3.400" fill="#383838"/><rect x="1574" y="868.6" width="10.800" height="3.400" fill="#383838"/><rect x="1574" y="874.9" width="10.800" height="3.400" fill="#383838"/><rect x="1574" y="881.2" width="10.800" height="3.400" fill="#383838"/><rect x="1574" y="887.6" width="10.800" height="3.400" fill="#383838"/><rect x="1574" y="893.9" width="10.800" height="3.400" fill="#383838"/><rect x="1574" y="900.2" width="10.800" height="3.400" fill="#383838"/><rect x="1574" y="906.5" width="10.800" height="3.400" fill="#383838"/><rect x="1574" y="912.8" width="10.800" height="3.400" fill="#383838"/><rect x="1574" y="919.2" width="10.800" height="3.400" fill="#383838"/><rect x="1574" y="925.5" width="10.800" height="3.400" fill="#383838"/><rect x="1574" y="931.8" width="10.800" height="3.400" fill="#383838"/><rect x="1593.6" y="697" width="10.800" height="3.400" fill="#343434"/><rect x="1593.6" y="710.6" width="10.800" height="3.400" fill="#383838"/><rect x="1593.6" y="716.9" width="10.800" height="3.400" fill="#383838"/><rect x="1593.6" y="723.2" width="10.800" height="3.400" fill="#383838"/><rect x="1593.6" y="729.6" width="10.800" height="3.400" fill="#383838"/><rect x="1593.6" y="735.9" width="10.800" height="3.400" fill="#383838"/><rect x="1593.6" y="742.2" width="10.800" height="3.400" fill="#383838"/><rect x="1593.6" y="748.5" width="10.800" height="3.400" fill="#383838"/><rect x="1593.6" y="754.8" width="10.800" height="3.400" fill="#383838"/><rect x="1593.6" y="761.2" width="10.800" height="3.400" fill="#383838"/><rect x="1593.6" y="767.5" width="10.800" height="3.400" fill="#383838"/><rect x="1593.6" y="773.8" width="10.800" height="3.400" fill="#383838"/><rect x="1593.6" y="780.1" width="10.800" height="3.400" fill="#383838"/><rect x="1593.6" y="786.4" width="10.800" height="3.400" fill="#383838"/><rect x="1593.6" y="792.8" width="10.800" height="3.400" fill="#383838"/><rect x="1593.6" y="799.1" width="10.800" height="3.400" fill="#383838"/><rect x="1593.6" y="805.4" width="10.800" height="3.400" fill="#383838"/><rect x="1593.6" y="811.7" width="10.800" height="3.400" fill="#383838"/><rect x="1593.6" y="818.0" width="10.800" height="3.400" fill="#383838"/><rect x="1593.6" y="824.4" width="10.800" height="3.400" fill="#383838"/><rect x="1593.6" y="830.7" width="10.800" height="3.400" fill="#383838"/><rect x="1593.6" y="837.0" width="10.800" height="3.400" fill="#383838"/><rect x="1593.6" y="843.3" width="10.800" height="3.400" fill="#383838"/><rect x="1593.6" y="849.6" width="10.800" height="3.400" fill="#383838"/><rect x="1593.6" y="856.0" width="10.800" height="3.400" fill="#383838"/><rect x="1593.6" y="862.3" width="10.800" height="3.400" fill="#383838"/><rect x="1593.6" y="868.6" width="10.800" height="3.400" fill="#383838"/><rect x="1593.6" y="874.9" width="10.800" height="3.400" fill="#383838"/><rect x="1593.6" y="881.2" width="10.800" height="3.400" fill="#383838"/><rect x="1593.6" y="887.6" width="10.800" height="3.400" fill="#383838"/><rect x="1593.6" y="893.9" width="10.800" height="3.400" fill="#383838"/><rect x="1593.6" y="900.2" width="10.800" height="3.400" fill="#383838"/><rect x="1593.6" y="906.5" width="10.800" height="3.400" fill="#383838"/><rect x="1593.6" y="912.8" width="10.800" height="3.400" fill="#383838"/><rect x="1593.6" y="919.2" width="10.800" height="3.400" fill="#383838"/><rect x="1593.6" y="925.5" width="10.800" height="3.400" fill="#383838"/><rect x="1593.6" y="931.8" width="10.800" height="3.400" fill="#383838"/><rect x="1562" y="972" width="1" height="26" fill="#2c2c2c"/><rect x="1578" y="973" width="11.500" height="2.200" fill="#333"/><rect x="1578" y="977" width="11.500" height="2.200" fill="#333"/><rect x="1578" y="981" width="11.500" height="2.200" fill="#333"/><rect x="1578" y="985" width="11.500" height="2.200" fill="#333"/><rect x="1578" y="989" width="11.500" height="2.200" fill="#333"/><rect x="1578" y="993" width="11.500" height="2.200" fill="#333"/><rect x="1591.5" y="973" width="11.500" height="2.200" fill="#333"/><rect x="1591.5" y="977" width="11.500" height="2.200" fill="#333"/><rect x="1591.5" y="981" width="11.500" height="2.200" fill="#333"/><rect x="1591.5" y="985" width="11.500" height="2.200" fill="#333"/><rect x="1591.5" y="989" width="11.500" height="2.200" fill="#333"/><rect x="1591.5" y="993" width="11.500" height="2.200" fill="#333"/></svg>
<div class="abs" style="left:1575px;top:950px;width:10px;text-align:center;font:9px/12px 'DejaVu Sans',sans-serif;color:#5c5c5c">L</div><div class="abs" style="left:1594.500px;top:950px;width:10px;text-align:center;font:9px/12px 'DejaVu Sans',sans-serif;color:#5c5c5c">R</div>
<div class="abs" id="botl"></div><div class="abs" id="botr"></div>
<svg class="abs" style="left:0;top:1002px;width:600px;height:4px" viewBox="0 0 600 4"><g fill="#2a2a2a"><path d="M0 1.500l8 2.500H0zM9 4l3-2.500h2L12 4zM20 1.500h2V4h-2zM27.500 1.500h2V4h-2zM33 1.500l5 2.500h-4zM37 4l3.500-2.500h1.500L40 4z"/><path d="M452 1l4 3h-3l-2-2z"/><rect x="472.500" y="2" width="10" height="2" fill="#666a72"/></g></svg>
<!--/TIMELINE-->
<!--BUBBLES-->
<svg class="abs" style="left:90px;top:70px;width:400px;height:130px" viewBox="90 70 400 130"><path fill="#0038f5" d="M138 78H460.500a20 20 0 0 1 20 20V169.800a20 20 0 0 1-20 20H99.500C107 185 113 178 118 167.500V98a20 20 0 0 1 20-20z"/></svg>
<div class="bub" style="left:151px;top:109px;background:none;font-size:46px;letter-spacing:1.500px">Transiciones</div>
<svg class="abs" style="left:80px;top:245px;width:280px;height:130px" viewBox="80 245 280 130"><path fill="#0038f5" d="M89 254H329a21 21 0 0 1 21 21V345a21 21 0 0 1-21 21H129a21 21 0 0 1-21-21V271.500C102 263 96 258 89 254z"/></svg>
<div class="bub" style="left:140.500px;top:285.500px;background:none;font-size:44px;letter-spacing:3.400px">Efectos</div>
<!--/BUBBLES-->
</body>
</html>
